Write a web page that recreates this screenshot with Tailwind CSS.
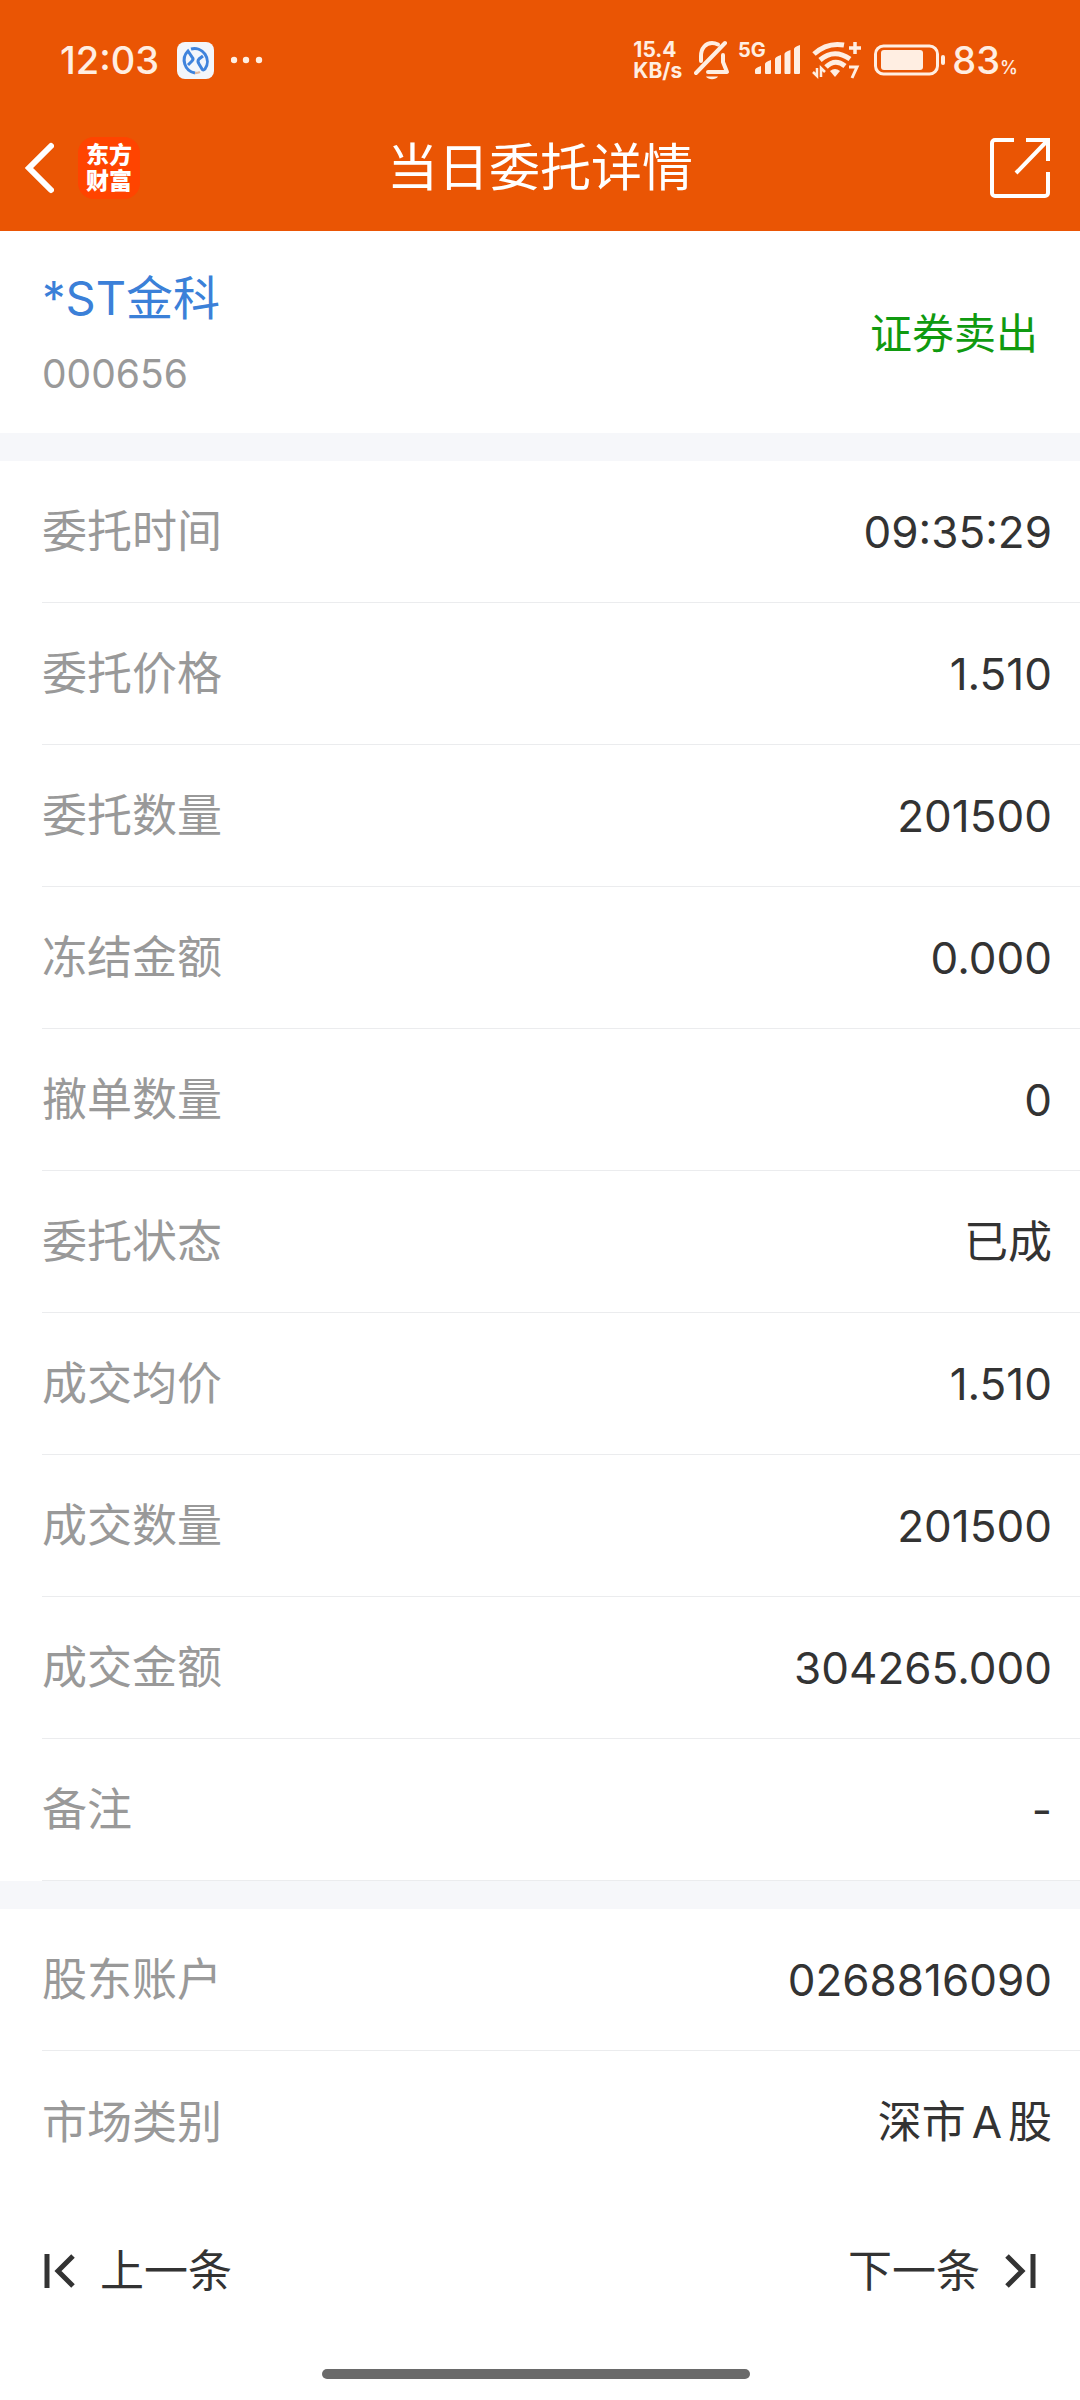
<!DOCTYPE html>
<html lang="zh-CN">
<head>
<meta charset="utf-8">
<meta name="viewport" content="width=device-width, initial-scale=1">
<title>当日委托详情</title>
<script src="https://cdn.jsdelivr.net/npm/@tailwindcss/browser@4"></script>
</head>
<body class="flex min-h-screen flex-col bg-white font-['Inter','Noto_Sans_CJK_SC',sans-serif] text-[#333]">

<header class="bg-[#ea5504] text-white">
  <!-- System status bar -->
  <div class="flex h-[120px] items-center justify-between pr-[62px] pl-[60px] text-[#ffeee2]">
    <div class="flex items-center">
      <span class="w-[117px] text-[38px] leading-none font-medium">12:03</span>
      <svg class="size-[37px]" viewBox="0 0 37 37" fill="none" aria-hidden="true">
        <rect width="37" height="37" rx="8" fill="#f3f6fb"/>
        <g stroke="#3f83dc" stroke-width="3">
          <path d="M14 7A13 13 0 0 1 28 27q-2 2-3 0l-3-5q-2-3 0-5l4-3"/>
          <path d="M11 23l4-4q2-2 0-4l-4-6A13 13 0 0 0 18 31"/>
        </g>
        <path d="M18 31c2 0 3 0 5-1" stroke="#e0b9a0" stroke-width="2.500"/>
      </svg>
      <svg class="ml-[17px] h-2 w-8" viewBox="0 0 32 8" fill="currentColor" aria-hidden="true"><circle cx="3" cy="4" r="3.200"/><circle cx="15" cy="4" r="3.200"/><circle cx="28" cy="4" r="3.200"/></svg>
    </div>
    <div class="flex items-center">
      <div class="flex w-[61px] flex-col text-[21px] leading-[21px] font-bold"><span>15.4</span><span>KB/s</span></div>
      <svg class="h-10 w-9" viewBox="0 0 36 40" fill="none" stroke="currentColor" stroke-width="4" stroke-linecap="round" stroke-linejoin="round" aria-label="静音">
        <path d="M2 33L31 3"/>
        <path d="M7 21v-5C7 8 12 3 18 3c2 0 4 .5 6 1.500"/>
        <path d="M29 15v7l4 10H14"/>
        <path d="M12 36.500h12c-2 3.500-10 3.500-12 0z" fill="currentColor" stroke="none"/>
      </svg>
      <svg class="ml-2 h-12 w-[62px]" viewBox="0 -4 62 48" fill="currentColor" aria-label="5G 信号">
        <text x="0" y="17" font-size="20" font-weight="700">5G</text>
        <path d="M17 30q0-2 6-4v7a1 1 0 0 1-1 1h-4a1 1 0 0 1-1-1zM27 24q0-2 6-4v13a1 1 0 0 1-1 1h-4a1 1 0 0 1-1-1zM37 19q0-2 6-4v18a1 1 0 0 1-1 1h-4a1 1 0 0 1-1-1zM46.500 14q0-2 6-4v23a1 1 0 0 1-1 1h-4a1 1 0 0 1-1-1zM56 9q0-2 6-4v28a1 1 0 0 1-1 1h-4a1 1 0 0 1-1-1z"/>
      </svg>
      <svg class="ml-3 h-10 w-[50px]" viewBox="0 0 50 40" fill="none" stroke="currentColor" aria-label="Wi-Fi 7">
        <path d="M2 14Q15 2 32 5" stroke-width="5"/>
        <path d="M8 20Q22 8 38 19" stroke-width="5"/>
        <path d="M14 27Q23 18 33 26" stroke-width="5"/>
        <path d="M18 31q5-4 10 0l-5 6z" fill="currentColor" stroke="none"/>
        <path d="M43 2v12M37 8h12" stroke-width="3.500"/>
        <path d="M1 32l4 4V28M9 37V28l4 4" stroke-width="2.500"/>
        <path d="M37 27h8l-5 11" stroke-width="3"/>
      </svg>
      <svg class="ml-3 h-10 w-[72px]" viewBox="0 0 72 40" fill="none" aria-label="电量">
        <rect x="1.500" y="6" width="62" height="28" rx="8" stroke="currentColor" stroke-width="3"/>
        <rect x="7" y="10" width="42" height="20" rx="3" fill="currentColor"/>
        <rect x="67" y="15" width="4" height="10" rx="2" fill="currentColor"/>
      </svg>
      <span class="ml-1.5 flex items-baseline text-[38px] leading-none font-medium">83<small class="text-[18px] leading-none">%</small></span>
    </div>
  </div>

  <!-- Title bar -->
  <nav class="grid h-[111px] grid-cols-[1fr_auto_1fr] items-center px-6 pb-4">
    <div class="flex items-center gap-6">
      <button type="button" aria-label="返回">
        <svg class="h-[52px] w-[30px]" viewBox="0 0 30 52" fill="none" stroke="currentColor" stroke-width="6" stroke-linecap="round" stroke-linejoin="miter" aria-hidden="true"><path d="M27 4L5 26l22 22"/></svg>
      </button>
      <a href="#" class="flex size-[62px] flex-col items-center justify-center rounded-2xl bg-[#ff4400] text-[23px] leading-[26px] font-black"><span>东方</span><span>财富</span></a>
    </div>
    <h1 class="text-[51px] leading-none">当日委托详情</h1>
    <button type="button" class="justify-self-end pr-1.5" aria-label="分享">
      <svg class="size-[60px]" viewBox="0 0 60 60" fill="none" stroke="currentColor" stroke-width="4" aria-hidden="true">
        <path d="M24 2H5a3 3 0 0 0-3 3v50a3 3 0 0 0 3 3h50a3 3 0 0 0 3-3V34"/>
        <path d="M36 2h22v21M57 3L26 35"/>
      </svg>
    </button>
  </nav>
</header>

<main class="flex-1">
  <section class="flex h-[202px] items-center justify-between px-[42px] pt-1">
    <div class="flex flex-col gap-6">
      <h2 class="text-[47px] leading-[56px] text-[#3b80d8]">*ST金科</h2>
      <p class="text-[39px] leading-[48px] text-[#999]">000656</p>
    </div>
    <p class="text-[42px] leading-none text-[#109a10]">证券卖出</p>
  </section>

  <dl class="border-t-[28px] border-[#f6f7fa] text-[44px] leading-none">
    <div class="ml-[42px] flex h-[142px] items-center justify-between border-b border-[#ebecee] pr-7"><dt class="text-[45px] leading-none text-[#999]">委托时间</dt><dd>09:35:29</dd></div>
    <div class="ml-[42px] flex h-[142px] items-center justify-between border-b border-[#ebecee] pr-7"><dt class="text-[45px] leading-none text-[#999]">委托价格</dt><dd>1.510</dd></div>
    <div class="ml-[42px] flex h-[142px] items-center justify-between border-b border-[#ebecee] pr-7"><dt class="text-[45px] leading-none text-[#999]">委托数量</dt><dd>201500</dd></div>
    <div class="ml-[42px] flex h-[142px] items-center justify-between border-b border-[#ebecee] pr-7"><dt class="text-[45px] leading-none text-[#999]">冻结金额</dt><dd>0.000</dd></div>
    <div class="ml-[42px] flex h-[142px] items-center justify-between border-b border-[#ebecee] pr-7"><dt class="text-[45px] leading-none text-[#999]">撤单数量</dt><dd>0</dd></div>
    <div class="ml-[42px] flex h-[142px] items-center justify-between border-b border-[#ebecee] pr-7"><dt class="text-[45px] leading-none text-[#999]">委托状态</dt><dd>已成</dd></div>
    <div class="ml-[42px] flex h-[142px] items-center justify-between border-b border-[#ebecee] pr-7"><dt class="text-[45px] leading-none text-[#999]">成交均价</dt><dd>1.510</dd></div>
    <div class="ml-[42px] flex h-[142px] items-center justify-between border-b border-[#ebecee] pr-7"><dt class="text-[45px] leading-none text-[#999]">成交数量</dt><dd>201500</dd></div>
    <div class="ml-[42px] flex h-[142px] items-center justify-between border-b border-[#ebecee] pr-7"><dt class="text-[45px] leading-none text-[#999]">成交金额</dt><dd>304265.000</dd></div>
    <div class="ml-[42px] flex h-[142px] items-center justify-between border-b border-[#ebecee] pr-7"><dt class="text-[45px] leading-none text-[#999]">备注</dt><dd>-</dd></div>
  </dl>

  <dl class="border-t-[28px] border-[#f6f7fa] text-[44px] leading-none">
    <div class="ml-[42px] flex h-[142px] items-center justify-between border-b border-[#ebecee] pr-7"><dt class="text-[45px] leading-none text-[#999]">股东账户</dt><dd>0268816090</dd></div>
    <div class="ml-[42px] flex h-[142px] items-center justify-between pr-7"><dt class="text-[45px] leading-none text-[#999]">市场类别</dt><dd>深市<span class="mx-1.5">A</span>股</dd></div>
  </dl>
</main>

<footer class="flex flex-col items-center pb-[21px]">
  <div class="flex h-[156px] w-full items-center justify-between px-[44px] text-[44px] leading-none">
    <button type="button" class="flex items-center gap-6">
      <svg class="h-[34px] w-8" viewBox="0 0 32 34" fill="none" stroke="currentColor" stroke-width="5" aria-hidden="true"><path d="M3 0v34M29 2L14 17l15 15"/></svg>
      上一条
    </button>
    <button type="button" class="flex items-center gap-6">
      下一条
      <svg class="h-[34px] w-8" viewBox="0 0 32 34" fill="none" stroke="currentColor" stroke-width="5" aria-hidden="true"><path d="M29 0v34M3 2l15 15L3 32"/></svg>
    </button>
  </div>
  <div class="mt-5 mr-2 h-[10px] w-[428px] rounded-full bg-[#6a6a6a]"></div>
</footer>

</body>
</html>
